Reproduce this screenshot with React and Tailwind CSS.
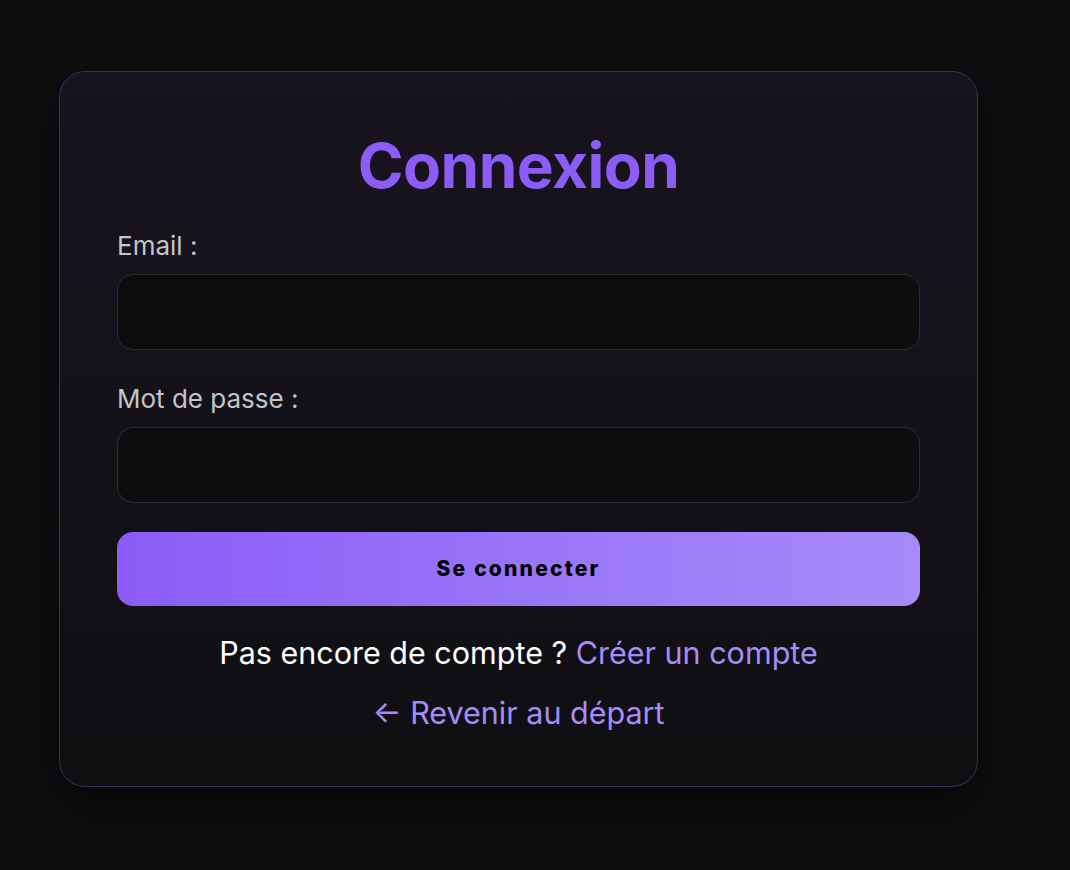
import React, { useState } from 'react';

const font = { fontFamily: 'Inter, "Noto Sans", sans-serif' };

const Field = ({ label, type, value, onChange, className }) => (
    <div className={className}>
        <label className="block text-[26px] leading-[30px] text-[#c4c4c8]">{label}</label>
        <input
            type={type}
            value={value}
            onChange={(e) => onChange(e.target.value)}
            className="mt-[13px] block w-full h-[76px] bg-[#0d0d0e] border border-[#2e2e32] rounded-[16px] px-5 text-[22px] text-white focus:outline-none"
        />
    </div>
);

export default function App() {
    const [email, setEmail] = useState('');
    const [password, setPassword] = useState('');

    return (
        <div className="min-h-[870px] w-full bg-[#0e0e10] pt-[71px] pl-[59px]" style={font}>
            {/* Login card */}
            <div className="w-[919px] rounded-[26px] border border-[#3a2e68] bg-gradient-to-b from-[#18141f] to-[#0f0f12] bg-clip-padding shadow-[0_20px_50px_rgba(0,0,0,0.5)] px-[57px] pt-[58px] pb-[53px]">
                <h1 className="text-center text-[62px] leading-[72px] font-bold text-[#8b5cf6] tracking-[-0.5px]">Connexion</h1>

                <form onSubmit={(e) => e.preventDefault()}>
                    <Field label="Email :" type="email" value={email} onChange={setEmail} className="mt-[29px]" />
                    <Field label="Mot de passe :" type="password" value={password} onChange={setPassword} className="mt-[34px]" />

                    <button
                        type="submit"
                        className="mt-[29px] block w-full h-[74px] rounded-[16px] bg-gradient-to-r from-[#8b5cf6] to-[#a78bfa] text-black text-[21px] font-extrabold tracking-[2.2px]"
                    >
                        Se connecter
                    </button>
                </form>

                <p className="mt-[27px] text-center text-[30.5px] leading-[40px] text-white">
                    Pas encore de compte ? <a href="#" className="text-[#a78bfa]">Créer un compte</a>
                </p>
                <p className="mt-[20px] text-center text-[30.5px] leading-[40px]">
                    <a href="#" className="text-[#a78bfa]">← Revenir au départ</a>
                </p>
            </div>
        </div>
    );
}
